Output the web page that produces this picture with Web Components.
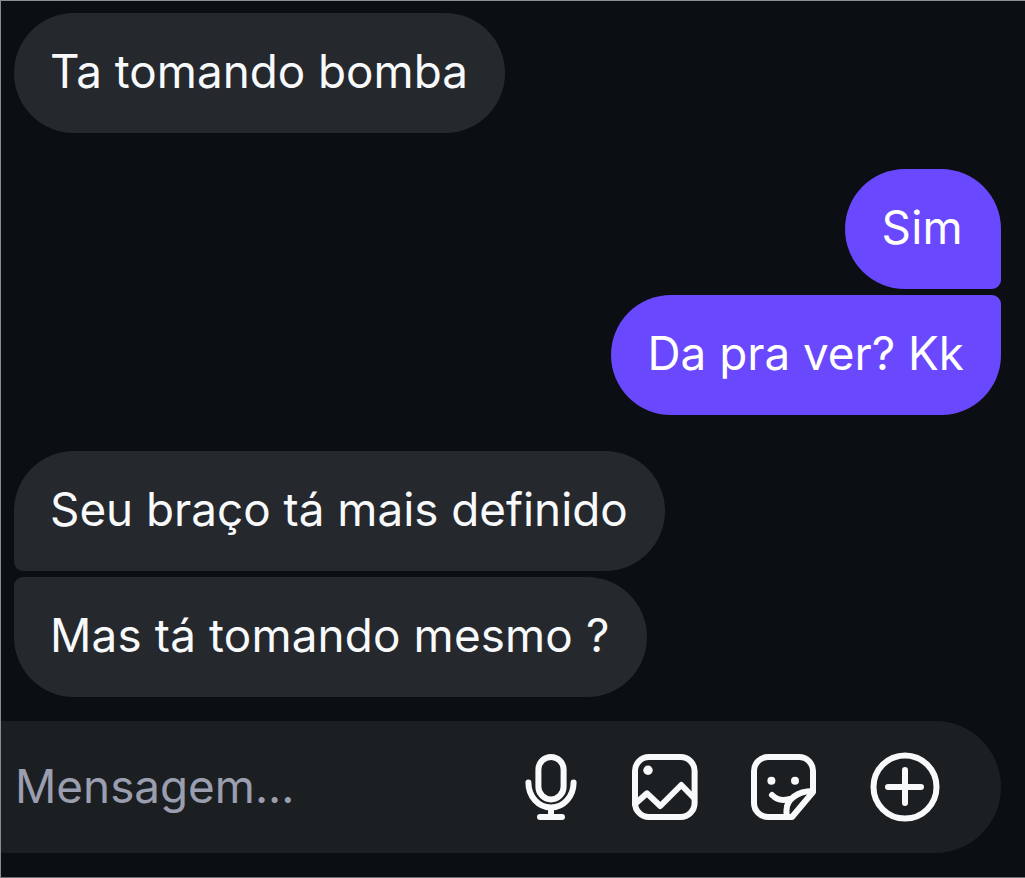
<!DOCTYPE html>
<html>
<head>
<meta charset="utf-8">
<style>
html, body { margin: 0; height: 100%; background: #0b0f13; }
</style>
</head>
<body>
<chat-screen>
  <chat-thread>
    <chat-bubble corner="none">Ta tomando bomba</chat-bubble>
    <chat-group side="me" style="margin-top:36px">
      <chat-bubble side="me" corner="br" style="padding:0 38px 0 37px;letter-spacing:.3px">Sim</chat-bubble>
      <chat-bubble side="me" corner="tr">Da pra ver? Kk</chat-bubble>
    </chat-group>
    <chat-group style="margin-top:36px">
      <chat-bubble corner="bl">Seu braço tá mais definido</chat-bubble>
      <chat-bubble corner="tl" style="letter-spacing:.16px">Mas tá tomando mesmo ?</chat-bubble>
    </chat-group>
  </chat-thread>
  <chat-input placeholder="Mensagem..."></chat-input>
</chat-screen>
<script>
class ChatScreen extends HTMLElement {
  constructor() {
    super();
    this.attachShadow({ mode: "open" });
    this.shadowRoot.innerHTML = `
<style>
:host { display: flex; flex-direction: column; height: 878px; box-sizing: border-box; background: #0b0f13;
  border-top: 1px solid #8a8d90; border-left: 1px solid #8a8d90; border-bottom: 1px solid #6c6f72;
  font-family: Inter, "Liberation Sans", sans-serif; overflow: hidden; }
</style>
<slot></slot>`;
  }
}
customElements.define("chat-screen", ChatScreen);

class ChatThread extends HTMLElement {
  constructor() {
    super();
    this.attachShadow({ mode: "open" });
    this.shadowRoot.innerHTML = `
<style>
:host { display: flex; flex-direction: column; align-items: flex-start; padding: 12px 24px 0 13px; }
::slotted(chat-group) { align-self: stretch; }
</style>
<slot></slot>`;
  }
}
customElements.define("chat-thread", ChatThread);

class ChatGroup extends HTMLElement {
  constructor() {
    super();
    this.attachShadow({ mode: "open" });
    this.shadowRoot.innerHTML = `
<style>
:host { display: flex; flex-direction: column; gap: 6px; align-items: flex-start; }
:host([side="me"]) { align-items: flex-end; }
</style>
<slot></slot>`;
  }
}
customElements.define("chat-group", ChatGroup);

class ChatBubble extends HTMLElement {
  constructor() {
    super();
    this.attachShadow({ mode: "open" });
    this.shadowRoot.innerHTML = `
<style>
:host { display: block; box-sizing: border-box; height: 120px; padding: 0 37px 0 36px; line-height: 118px;
  border-radius: 60px; background: #25292d; color: #f8f9fb; font-size: 45.8px; font-weight: 400; white-space: nowrap; }
:host([side="me"]) { background: #6a48fd; color: #fff; }
:host([corner="br"]) { border-bottom-right-radius: 9px; }
:host([corner="tr"]) { border-top-right-radius: 9px; }
:host([corner="bl"]) { border-bottom-left-radius: 9px; }
:host([corner="tl"]) { border-top-left-radius: 9px; }
</style>
<slot></slot>`;
  }
}
customElements.define("chat-bubble", ChatBubble);

class ChatInput extends HTMLElement {
  constructor() {
    super();
    this.attachShadow({ mode: "open" });
    this.shadowRoot.innerHTML = `
<style>
:host { display: flex; align-items: center; box-sizing: border-box; width: 1000px; height: 132px; margin-top: 24px;
  padding-left: 14px; background: #1c1f22; border-radius: 0 66px 66px 0; }
.ph { flex: 1; color: #9a9eaf; font-size: 45.8px; line-height: 130px; white-space: nowrap; }
.icons { display: flex; align-items: center; }
svg { display: block; fill: none; stroke: #f8f9fb; stroke-width: 6; stroke-linecap: round; stroke-linejoin: round; }
.fill { fill: #f8f9fb; stroke: none; }
</style>
<span class="ph"></span>
<div class="icons">
  <svg width="52" height="66" viewBox="0 0 52 66" style="margin-right:55px">
    <rect x="13.4" y="3" width="25.2" height="42.4" rx="12.6"/>
    <path d="M3.4 28.5c0 14 10 25 22.6 25s22.6-11 22.6-25"/>
    <path d="M26 54v9M15 63h22"/>
  </svg>
  <svg width="66" height="66" viewBox="0 0 66 66" style="margin-right:53px">
    <rect x="3" y="3" width="59.6" height="60" rx="14"/>
    <circle class="fill" cx="16" cy="16.3" r="4.7"/>
    <path d="M3 50 15 39.3 28.3 52 49.3 31 62 44"/>
  </svg>
  <svg width="66" height="66" viewBox="0 0 66 66" style="margin-right:53px">
    <path d="M17 3h31a14 14 0 0 1 14 14V38L41 63H17A14 14 0 0 1 3 49V17A14 14 0 0 1 17 3z"/>
    <circle class="fill" cx="20.4" cy="26.7" r="4"/>
    <circle class="fill" cx="44" cy="26.7" r="4"/>
    <path d="M21 41c5 5 11 6 17 4"/>
    <path d="M35.5 62v-6C35.5 46 46 37 62 37"/>
  </svg>
  <svg width="70" height="70" viewBox="0 0 70 70" style="margin-right:61px">
    <circle cx="35" cy="35" r="31.5"/>
    <path d="M18 35h33M35 18v33"/>
  </svg>
</div>`;
    this.shadowRoot.querySelector(".ph").textContent = this.getAttribute("placeholder");
  }
}
customElements.define("chat-input", ChatInput);
</script>
</body>
</html>
